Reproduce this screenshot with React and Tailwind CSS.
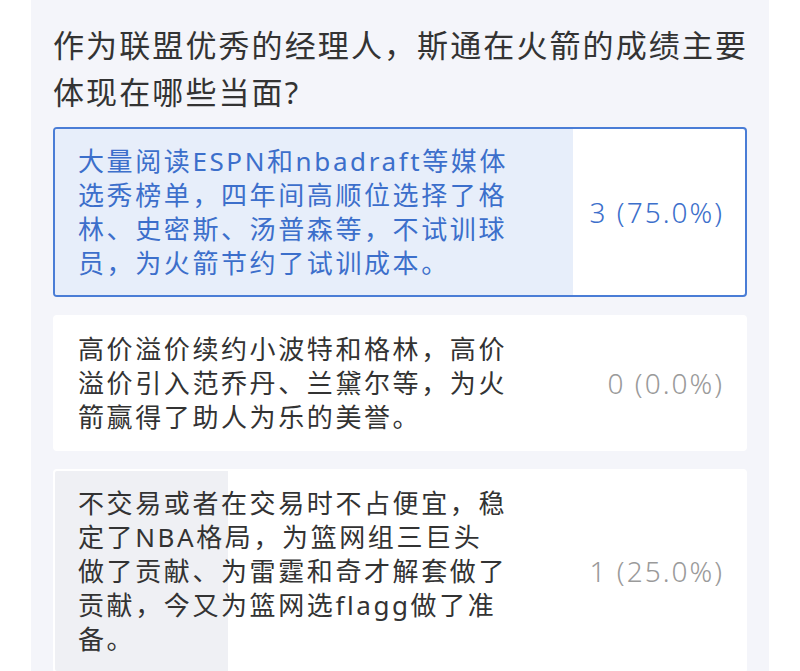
const options = [
  {
    lines: ['大量阅读ESPN和nbadraft等媒体', '选秀榜单，四年间高顺位选择了格', '林、史密斯、汤普森等，不试训球', '员，为火箭节约了试训成本。'],
    votes: 3,
    pct: 75,
    picked: true,
  },
  {
    lines: ['高价溢价续约小波特和格林，高价', '溢价引入范乔丹、兰黛尔等，为火', '箭赢得了助人为乐的美誉。'],
    votes: 0,
    pct: 0,
  },
  {
    lines: ['不交易或者在交易时不占便宜，稳', '定了NBA格局，为篮网组三巨头', '做了贡献、为雷霆和奇才解套做了', '贡献，今又为篮网选flagg做了准', '备。'],
    votes: 1,
    pct: 25,
  },
];

const font = { fontFamily: '"Noto Sans", "Noto Sans CJK SC", sans-serif' };

function Option({ o }) {
  return (
    <div
      className={`relative overflow-hidden rounded-[4px] border-2 bg-white ${o.picked ? 'border-[#4a7dd6]' : 'border-transparent'}`}
    >
      {/* 投票进度 */}
      <div
        className={`absolute left-0 top-0 bottom-0 ${o.picked ? 'bg-[#e7eefa]' : 'bg-[#eff0f4]'}`}
        style={{ width: `${o.pct}%` }}
      />
      <div className="relative flex items-center pl-[23px] pr-[21px] py-[15px]">
        <div className={`w-[440px] text-[26px] leading-[34px] tracking-[2.6px] ${o.picked ? 'text-[#3c6fcb]' : 'text-[#333333]'}`}>
          {o.lines.map((l, i) => <div key={i} className="whitespace-nowrap">{l}</div>)}
        </div>
        <div className={`flex-1 text-right text-[28px] tracking-[2px] font-light ${o.picked ? 'text-[#3c6fcb]' : 'text-[#9a9a9a]'}`}>
          {o.votes} ({o.pct.toFixed(1)}%)
        </div>
      </div>
    </div>
  );
}

export default function App() {
  return (
    <div className="w-[800px] h-[671px] bg-white overflow-hidden" style={font}>
      <div className="ml-[31px] w-[738px] h-full bg-[#f4f5fa] pt-[22px] px-[22px]">
        <div className="text-[31px] leading-[47px] tracking-[2.1px] text-[#333333] mb-[11px]">
          <div className="whitespace-nowrap">作为联盟优秀的经理人，斯通在火箭的成绩主要</div>
          <div className="whitespace-nowrap">体现在哪些当面?</div>
        </div>
        <div className="flex flex-col gap-[18px]">
          {options.map((o, i) => <Option key={i} o={o} />)}
        </div>
      </div>
    </div>
  );
}
